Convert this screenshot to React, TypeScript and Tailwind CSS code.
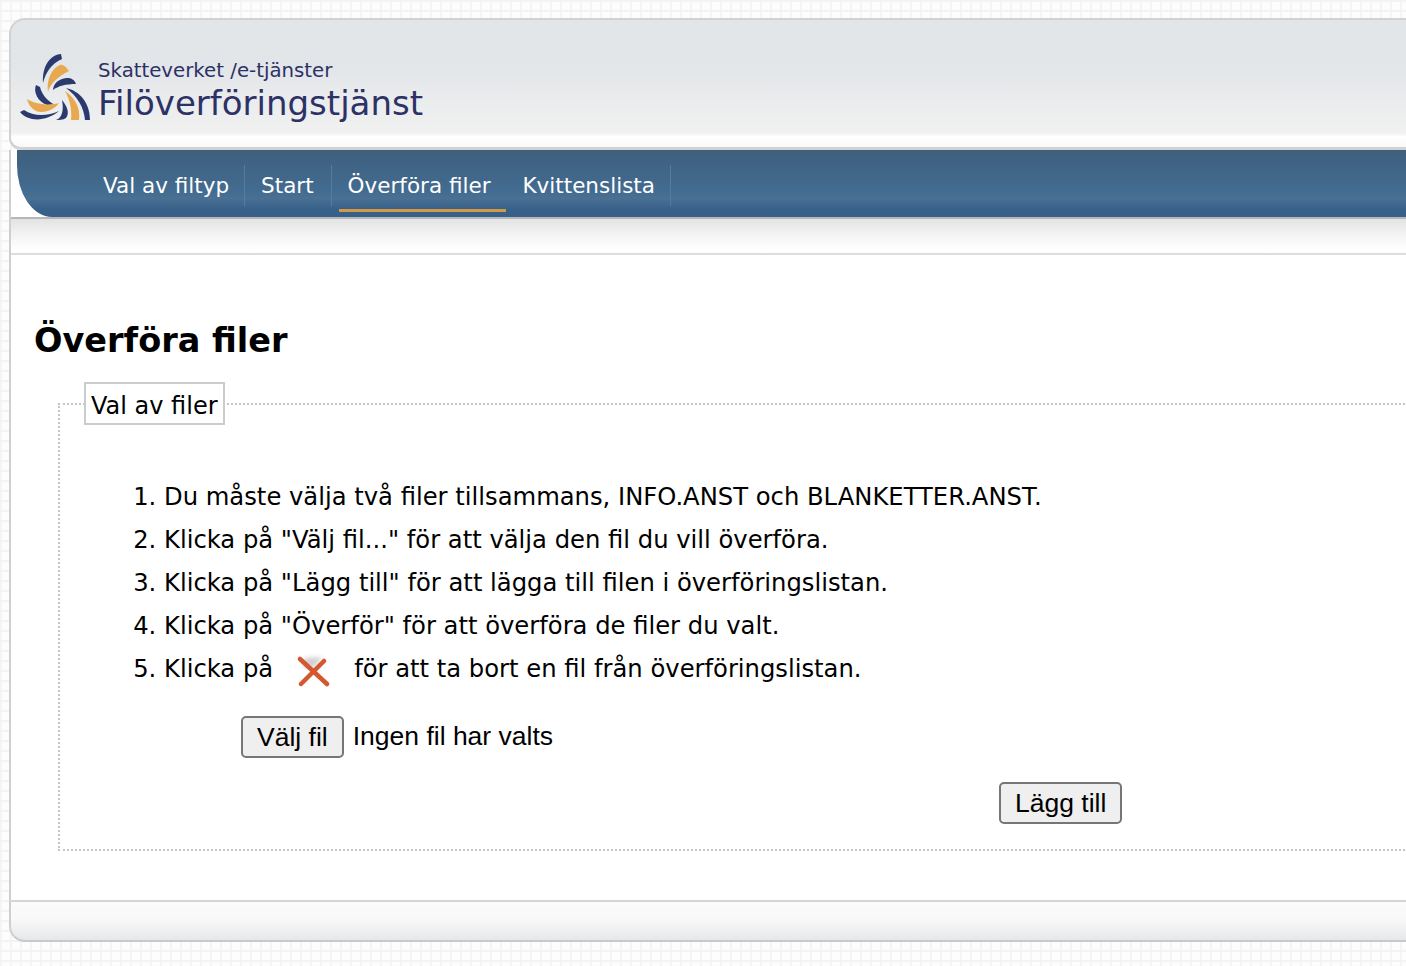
const sans = "font-['DejaVu_Sans','Verdana',sans-serif]";

function Logo() {
  const navy = "#2b3a6e";
  const orange = "#e8a850";
  return (
    <svg width="76" height="70" viewBox="18 52 76 70" className="shrink-0">
      <path d="M61,54 C50,55 42,66 43,83 C46,72 51,64 62,59 Z" fill={navy} />
      <path d="M69,71 C66,67 63,64 60,65 C52,68 46,80 48,92 C50,84 57,77 69,71 Z" fill={orange} />
      <path d="M76,84 C74,78 68,77 62,79 C56,81 53,86 53,90 C58,86 66,84 76,84 Z" fill={navy} />
      <path d="M36,85 C33,92 38,102 47,105 C50,106 54,106 57,106 C50,103 42,96 40,87 Z" fill={navy} />
      <path d="M27,99 C35,104 47,106 59,103 C54,110 44,114 36,111 C32,109 28,104 27,99 Z" fill={orange} />
      <path d="M20,112 C28,122 46,122 59,111 C48,116 34,117 24,110 Z" fill={navy} />
      <path d="M56,120 C62,118 64,110 62,100 C67,106 70,113 66,118 C63,120 59,120 56,120 Z" fill={navy} />
      <path d="M65,91 C74,97 81,107 79,120 L71,120 C72,110 70,100 65,91 Z" fill={orange} />
      <path d="M66,88 C80,91 90,103 90,120 L85,120 C84,107 77,96 66,88 Z" fill={navy} />
    </svg>
  );
}

function DeleteIcon() {
  return (
    <svg width="36" height="34" viewBox="0 0 36 34" className="inline-block align-middle ml-[22px] mr-[23px] -mt-[1px]">
      <path d="M9 5 L27 4 L20 14 L9 16 Z" fill="#bdbdbd" opacity="0.7" className="blur-[2px]" />
      <path d="M5 6 L32 31 M29 8 L6 31" stroke="#d4572f" strokeWidth="4.5" strokeLinecap="round" />
    </svg>
  );
}

function Sep() {
  return <span className="self-start w-px h-[41px] mt-[15px] bg-[#587b9a]" />;
}

function NavItem({ label, active, wide }: { label: string; active?: boolean; wide?: boolean }) {
  return (
    <a
      className={`self-start h-[62px] pt-[12px] flex items-center border-b-[3px] ${
        active
          ? "ml-[7px] pl-[9px] pr-[16px] border-[#d39a45]"
          : wide
            ? "pl-[16px] pr-[17px] border-transparent"
            : "pl-[16px] pr-[15px] border-transparent"
      }`}
    >
      <span className="text-[21.5px] leading-none text-white">{label}</span>
    </a>
  );
}

const steps = [
  'Du måste välja två filer tillsammans, INFO.ANST och BLANKETTER.ANST.',
  'Klicka på "Välj fil..." för att välja den fil du vill överföra.',
  'Klicka på "Lägg till" för att lägga till filen i överföringslistan.',
  'Klicka på "Överför" för att överföra de filer du valt.',
];

const btn =
  "font-['Liberation_Sans','Arial',sans-serif] h-[42px] px-[14px] rounded-[5px] border-2 border-[#767676] bg-[#efefef] text-[26.5px] leading-none text-black";

export default function App() {
  return (
    <div className={`${sans} w-[1406px] h-[966px] overflow-hidden pt-[18px] pl-[9px] bg-[#fdfdfd] bg-[linear-gradient(#f3f3f3_2px,transparent_2px),linear-gradient(90deg,#f5f5f5_2px,transparent_2px)] bg-[size:10px_10px]`}>
      <div className="w-[1500px]">
        <header className="h-[132px] flex items-end pb-[25px] pl-[7px] rounded-tl-[16px] rounded-bl-[12px] border-t-2 border-l-2 border-b-[3px] border-[#d2d2d2] bg-[linear-gradient(#e3e6e9_0%,#e3e6e9_38%,#f1f1f1_89%,#ffffff_92%,#f9f9f9_100%)]">
          <Logo />
          <div className="ml-[4px] -mb-[2px] text-[#2c3166]">
            <div className="text-[19.75px] leading-[22px]">Skatteverket /e-tjänster</div>
            <div className="text-[34px] leading-[42px]">Filöverföringstjänst</div>
          </div>
        </header>
        <div className="border-l-2 border-[#cfcfcf] bg-white">
          <nav className="ml-[6px] h-[67px] flex pl-[70px] rounded-bl-[35px_52px] bg-[linear-gradient(#3f5f7d_0%,#426c91_62%,#4a7093_72%,#38618a_88%,#375f87_100%)]">
            <NavItem label="Val av filtyp" />
            <Sep />
            <NavItem label="Start" wide />
            <Sep />
            <NavItem label="Överföra filer" active />
            <NavItem label="Kvittenslista" />
            <Sep />
          </nav>
          <div className="h-[38px] border-t-2 border-[#b5b8bb] border-b-2 border-b-[#dddddd] bg-[linear-gradient(#e3e3e3_0%,#f3f3f3_45%,#ffffff_90%)]" />
        </div>
        <main className="h-[645px] border-l-2 border-[#cfcfcf] bg-white pl-[23px] pt-[64px]">
          <h1 className="text-[33.5px] leading-[44px] font-bold text-black">Överföra filer</h1>
          <fieldset className="mt-[19px] ml-[24px] h-[469px] border-2 border-dotted border-[#c4c4c4] pl-[24px]">
            <legend className="h-[43px] px-[5px] border-2 border-[#cccccc] bg-white text-[24px] leading-[45px] text-black">
              Val av filer
            </legend>
            <ol className="mt-[50px] ml-[80px] list-decimal text-[24.25px] leading-[43px] text-black">
              {steps.map((s) => (
                <li key={s} className="h-[43px]">{s}</li>
              ))}
              <li className="h-[43px]">
                Klicka på<DeleteIcon />för att ta bort en fil från överföringslistan.
              </li>
            </ol>
            <div className="mt-[26px] ml-[157px] flex items-center">
              <button className={btn}>Välj fil</button>
              <span className="ml-[9px] font-['Liberation_Sans','Arial',sans-serif] text-[26.5px] text-black">Ingen fil har valts</span>
            </div>
            <div className="mt-[24px] ml-[915px]">
              <button className={btn}>Lägg till</button>
            </div>
          </fieldset>
        </main>
        <footer className="h-[42px] rounded-bl-[16px] border-l-2 border-t-2 border-b-2 border-t-[#d5d5d5] border-l-[#cfcfcf] border-b-[#c9c9c9] bg-[linear-gradient(#fbfbfb_0%,#f8f8f8_45%,#e6e8ea_100%)]" />
      </div>
    </div>
  );
}
